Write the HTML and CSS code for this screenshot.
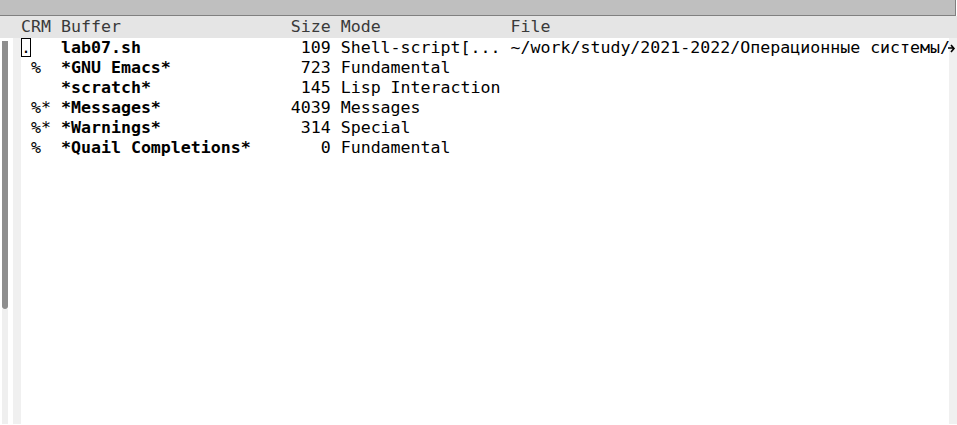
FILE: index.html
```html
<!DOCTYPE html>
<html>
<head>
<meta charset="utf-8">
<link rel="stylesheet" href="styles.css">
</head>
<body>
<div class="topbar"></div>
<div class="header">
  <div class="row head">
    <span class="crm">CRM</span><span class="name">Buffer</span><span class="size">Size</span><span class="mode">Mode</span><span class="file">File</span>
  </div>
</div>
<div class="main">
  <div class="scrollbar"><div class="thumb"></div><div class="track"></div></div>
  <div class="gap"></div>
  <div class="fringe"></div>
  <div class="content">
    <div class="row"><span class="crm"><span class="cursor">.</span></span><span class="name b">lab07.sh</span><span class="size">109</span><span class="mode">Shell-script[...</span><span class="file">~/work/study/2021-2022/Операционные системы/</span></div>
    <div class="row"><span class="crm"> %</span><span class="name b">*GNU Emacs*</span><span class="size">723</span><span class="mode">Fundamental</span><span class="file"></span></div>
    <div class="row"><span class="crm"></span><span class="name b">*scratch*</span><span class="size">145</span><span class="mode">Lisp Interaction</span><span class="file"></span></div>
    <div class="row"><span class="crm"> %*</span><span class="name b">*Messages*</span><span class="size">4039</span><span class="mode">Messages</span><span class="file"></span></div>
    <div class="row"><span class="crm"> %*</span><span class="name b">*Warnings*</span><span class="size">314</span><span class="mode">Special</span><span class="file"></span></div>
    <div class="row"><span class="crm"> %</span><span class="name b">*Quail Completions*</span><span class="size">0</span><span class="mode">Fundamental</span><span class="file"></span></div>
  </div>
  <div class="fringe right">
    <div class="fcell"><svg width="8" height="9" viewBox="0 0 8 9"><path d="M0 4h6M3 1l3 3.5L3 8" stroke="#000" stroke-width="1.6" fill="none"/></svg></div>
  </div>
</div>
</body>
</html>
```
FILE: styles.css
```css
html, body {
  margin: 0;
  padding: 0;
  background: #ffffff;
  width: 957px;
  height: 425px;
  overflow: hidden;
}
body {
  font-family: "DejaVu Sans Mono", "Liberation Mono", monospace;
  font-size: 16.6px;
  color: #000;
}
.topbar {
  height: 15px;
  width: 955px;
  background: #bfbfbf;
  border-bottom: 1px solid #808080;
  border-right: 1px solid #808080;
  box-sizing: content-box;
  width: 955px;
}
.header {
  height: 22px;
  background: #e5e5e5;
  padding-left: 21px;
}
.header .row {
  line-height: 22px;
  height: 22px;
  color: #3a3a3a;
}
.main {
  display: flex;
  height: 386px;
}
.scrollbar {
  width: 6px;
  margin-left: 2px;
  padding-top: 3px;
  display: flex;
  flex-direction: column;
}
.thumb {
  height: 268px;
  background: #8e8e8e;
  border-radius: 0 0 3px 3px;
}
.track {
  flex: 1;
  background: #efefef;
}
.gap {
  width: 5px;
}
.fringe {
  width: 8px;
  background: #f0f0f0;
}
.fringe.right {
  width: 8px;
}
.fcell {
  height: 20px;
  display: flex;
  align-items: center;
  justify-content: flex-start;
  padding-left: 0;
  margin-left: -1px;
}
.content {
  width: 928px;
  overflow: hidden;
}
.row {
  display: flex;
  white-space: pre;
  line-height: 20px;
  height: 20px;
}
.crm {
  width: 3ch;
  margin-right: 1ch;
  flex: none;
}
.name {
  width: 22ch;
  flex: none;
}
.b {
  font-weight: bold;
}
.size {
  width: 4ch;
  margin-left: 1ch;
  text-align: right;
  flex: none;
}
.mode {
  width: 16ch;
  margin-left: 1ch;
  flex: none;
}
.file {
  margin-left: 1ch;
  flex: none;
}
.cursor {
  display: inline-block;
  width: 1ch;
  height: 19px;
  box-shadow: inset 0 0 0 1px #000;
  line-height: 19px;
}
```
